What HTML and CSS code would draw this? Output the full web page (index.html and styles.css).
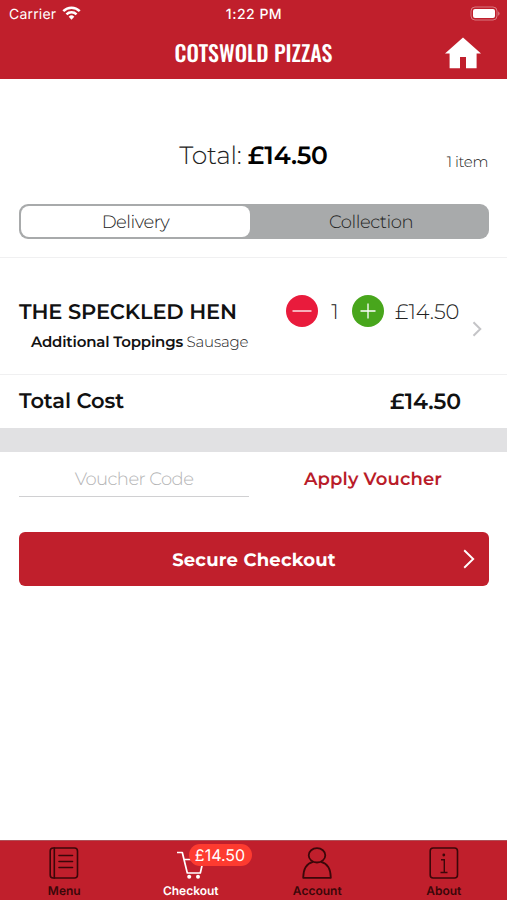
FILE: index.html
```html
<!DOCTYPE html>
<html lang="en">
<head>
<meta charset="utf-8">
<title>Cotswold Pizzas – Checkout</title>
<link rel="stylesheet" href="styles.css">
</head>
<body>
<div class="app">
  <header class="header">
    <div class="status">
      <span class="carrier">Carrier
        <svg class="wifi" viewBox="0 0 20 15" width="19" height="14"><g fill="none" stroke="#fff" stroke-width="2.7"><path d="M1.2 5.6a12.4 12.4 0 0 1 17.6 0"/><path d="M4.6 9a7.7 7.7 0 0 1 10.8 0"/></g><path d="M10 14.6 7 11.5a4.3 4.3 0 0 1 6 0z" fill="#fff"/></svg>
      </span>
      <span class="clock">1:22 PM</span>
      <svg class="battery" viewBox="0 0 31 15" width="31" height="15"><rect x="1" y="1" width="26" height="13" rx="4" fill="none" stroke="#fff" stroke-opacity=".4"/><rect x="3" y="3" width="22" height="9" rx="2" fill="#fff"/><path d="M28.3 5.2q2.4 2.3 0 4.6z" fill="#fff" fill-opacity=".5"/></svg>
    </div>
    <div class="titlebar">
      <h1>COTSWOLD PIZZAS</h1>
      <svg class="home" viewBox="0 0 36 32" width="36" height="32"><path d="M18 .5 36 16.5h-4.4v14.8H21V20h-6v11.3H4.6V16.5H0z" fill="#fff"/></svg>
    </div>
  </header>

  <section class="summary">
    <p class="total">Total: <b>£14.50</b></p>
    <span class="count">1 item</span>
  </section>

  <div class="segmented">
    <div class="segment selected">Delivery</div>
    <div class="segment">Collection</div>
  </div>

  <section class="item">
    <div class="item-main">
      <h2>THE SPECKLED HEN</h2>
      <p><b>Additional Toppings</b> Sausage</p>
    </div>
    <div class="quantity">
      <svg viewBox="0 0 32 32" width="32" height="32"><circle cx="16" cy="16" r="16" fill="#e91b3c"/><path d="M6.5 16h19" stroke="#fff" stroke-width="1.3"/></svg>
      <span class="qty">1</span>
      <svg viewBox="0 0 32 32" width="32" height="32"><circle cx="16" cy="16" r="16" fill="#48a61c"/><path d="M8.5 16h15M16 8.5v15" stroke="#fff" stroke-width="1.3"/></svg>
      <span class="price">£14.50</span>
    </div>
    <svg class="disclosure" viewBox="0 0 10 16" width="10" height="16"><path d="M1.5 1.2 8.3 8l-6.8 6.8" fill="none" stroke="#c4c4c7" stroke-width="2"/></svg>
  </section>

  <section class="cost"><span>Total Cost</span><span class="cost-value">£14.50</span></section>
  <div class="divider"></div>

  <section class="voucher">
    <div class="field">Voucher Code</div>
    <div class="apply">Apply Voucher</div>
  </section>

  <div class="checkout">
    <span>Secure Checkout</span>
    <svg class="go" viewBox="0 0 12 20" width="12" height="20"><path d="m1.2 1.2 9 8.8-9 8.8" fill="none" stroke="#fff" stroke-width="1.9"/></svg>
  </div>

  <nav class="tabs">
    <div class="tab">
      <svg viewBox="0 0 32 34" width="32" height="34" fill="none" stroke="#3b0709" stroke-width="1.6"><rect x="2.2" y="2" width="27.3" height="30" rx="3"/><path d="M6.3 2v30M11 9.5h13.5M11 15.5h13.5M11 21.5h13.5" stroke-linecap="round"/></svg>
      <span>Menu</span>
    </div>
    <div class="tab active">
      <svg viewBox="0 0 32 34" width="32" height="34" fill="none" stroke="#fff" stroke-width="1.7"><path d="M2 6.5h5.3l5 20.5h13l3-13M9 13.5h18" stroke-linejoin="round"/><g fill="#fff" stroke="none"><circle cx="14.2" cy="30.8" r="2"/><circle cx="23" cy="30.8" r="2"/></g></svg>
      <span>Checkout</span>
      <i class="badge">£14.50</i>
    </div>
    <div class="tab">
      <svg viewBox="0 0 32 34" width="32" height="34" fill="none" stroke="#3b0709" stroke-width="1.8"><ellipse cx="16" cy="9.3" rx="8.3" ry="7.2"/><path d="M12 15.9C5.5 17.5 2.3 23 2.2 31.8h27.6C29.7 23 26.5 17.5 20 15.9" stroke-linejoin="round"/></svg>
      <span>Account</span>
    </div>
    <div class="tab">
      <svg viewBox="0 0 32 34" width="32" height="34" fill="none" stroke="#3b0709" stroke-width="1.6"><rect x="2.2" y="2" width="27.3" height="30" rx="3"/><path d="M13 13.8h3.3v12.7M12.5 26.5h7" stroke-width="1.4"/><circle cx="15.8" cy="9" r="1.4" fill="#3b0709" stroke="none"/></svg>
      <span>About</span>
    </div>
  </nav>
</div>
</body>
</html>
```
FILE: styles.css
```css
* { box-sizing: border-box; margin: 0; padding: 0; }
body { background: #fff; font-family: Montserrat, Inter, "Open Sans", sans-serif; font-weight: 300; color: #222; text-rendering: geometricPrecision; }
svg { display: block; flex: none; }
b { font-weight: 600; }
.app { height: 900px; display: flex; flex-direction: column; overflow: hidden; }

.header { height: 79px; background: #c01f2c; color: #fff; flex: none; }
.status { height: 27px; padding: 0 6px 0 9px; display: grid; grid-template-columns: 1fr auto 1fr; align-items: center; font: 400 14px Inter, sans-serif; }
.carrier { display: flex; align-items: center; gap: 6px; letter-spacing: .2px; }
.carrier, .clock { padding-top: 1px; }
.wifi { margin-top: -2px; }
.clock { font-weight: 500; letter-spacing: .5px; margin-right: 2px; }
.battery { justify-self: end; }
.titlebar { height: 52px; padding: 0 26px; display: grid; grid-template-columns: 1fr auto 1fr; align-items: center; }
h1 { grid-column: 2; font: 500 22px/32px Oswald, "Liberation Sans Narrow", sans-serif; padding-bottom: 1px; }
.home { justify-self: end; }

.summary { height: 125px; flex: none; display: grid; grid-template-columns: 1fr auto 1fr; align-items: center; padding: 28px 19px 0; }
.total { grid-column: 2; font-size: 25px; letter-spacing: -.24px; }
.total b { color: #000; }
.count { justify-self: end; font-size: 15px; padding-top: 11px; letter-spacing: -.35px; }

.segmented { height: 35px; flex: none; margin: 0 18px 18px 19px; padding: 2px; display: flex; background: #a8aaab; border-radius: 9px; }
.segment { flex: 1; display: flex; align-items: center; justify-content: center; font-size: 18px; letter-spacing: -.47px; border-radius: 8px; padding-left: 5px; }
.selected { background: #fff; flex: none; width: 229px; padding-left: 0; }

.item { height: 118px; flex: none; display: flex; border-top: 1px solid #f0f0f1; border-bottom: 1px solid #f0f0f1; padding: 36px 25px 0 19px; }
.item-main { width: 267px; }
h2 { font-size: 21px; line-height: 36px; font-weight: 600; color: #111; white-space: nowrap; letter-spacing: -.14px; padding-top: 1px; }
.item-main p { font-size: 15px; line-height: 20px; padding: 1px 0 0 12px; white-space: nowrap; letter-spacing: -.19px; }
.item-main b { color: #111; }
.quantity { display: flex; align-items: center; height: 34px; font-size: 21px; }
.qty { width: 34px; text-align: center; padding-top: 2px; }
.price { width: 76px; padding: 2px 0 0 11px; letter-spacing: -.1px; }
.disclosure { margin: 27px 0 0 auto; }

.cost { height: 53px; flex: none; display: flex; align-items: center; justify-content: space-between; padding: 0 46px 0 19px; font-size: 21px; letter-spacing: -.1px; font-weight: 600; color: #111; }
.cost-value { font-size: 22px; }
.divider { height: 24px; flex: none; background: #e1e1e3; }

.voucher { height: 45px; flex: none; display: flex; padding-left: 19px; font-size: 18px; line-height: 54px; text-align: center; }
.field { width: 230px; border-bottom: 1px solid #d0d0d2; color: #b4b4b5; letter-spacing: -.55px; }
.apply { width: 248px; font-weight: 600; color: #b91c29; letter-spacing: .15px; }

.checkout { height: 54px; flex: none; margin: 35px 18px 0 19px; padding: 0 14px; display: grid; grid-template-columns: 1fr auto 1fr; align-items: center; background: #c01f2c; color: #fff; border-radius: 6px; font-size: 18px; letter-spacing: .2px; font-weight: 700; }
.checkout span { grid-column: 2; padding-top: 2px; }
.go { justify-self: end; }

.tabs { margin-top: auto; height: 60px; flex: none; display: flex; background: #c01f2c; border-top: 1px solid #b05058; padding-left: 1px; }
.tab { position: relative; width: 126.5px; padding-top: 5px; display: flex; flex-direction: column; align-items: center; font: 600 12px/15px Inter, sans-serif; color: #3b0709; }
.tab span { padding-top: 3px; }
.active { color: #fff; }
.badge { position: absolute; left: 61px; top: 3px; width: 63px; height: 22px; border-radius: 11px; background: #fd3b30; color: #fff; font: 400 16px/22px Inter, sans-serif; text-align: center; }
```
